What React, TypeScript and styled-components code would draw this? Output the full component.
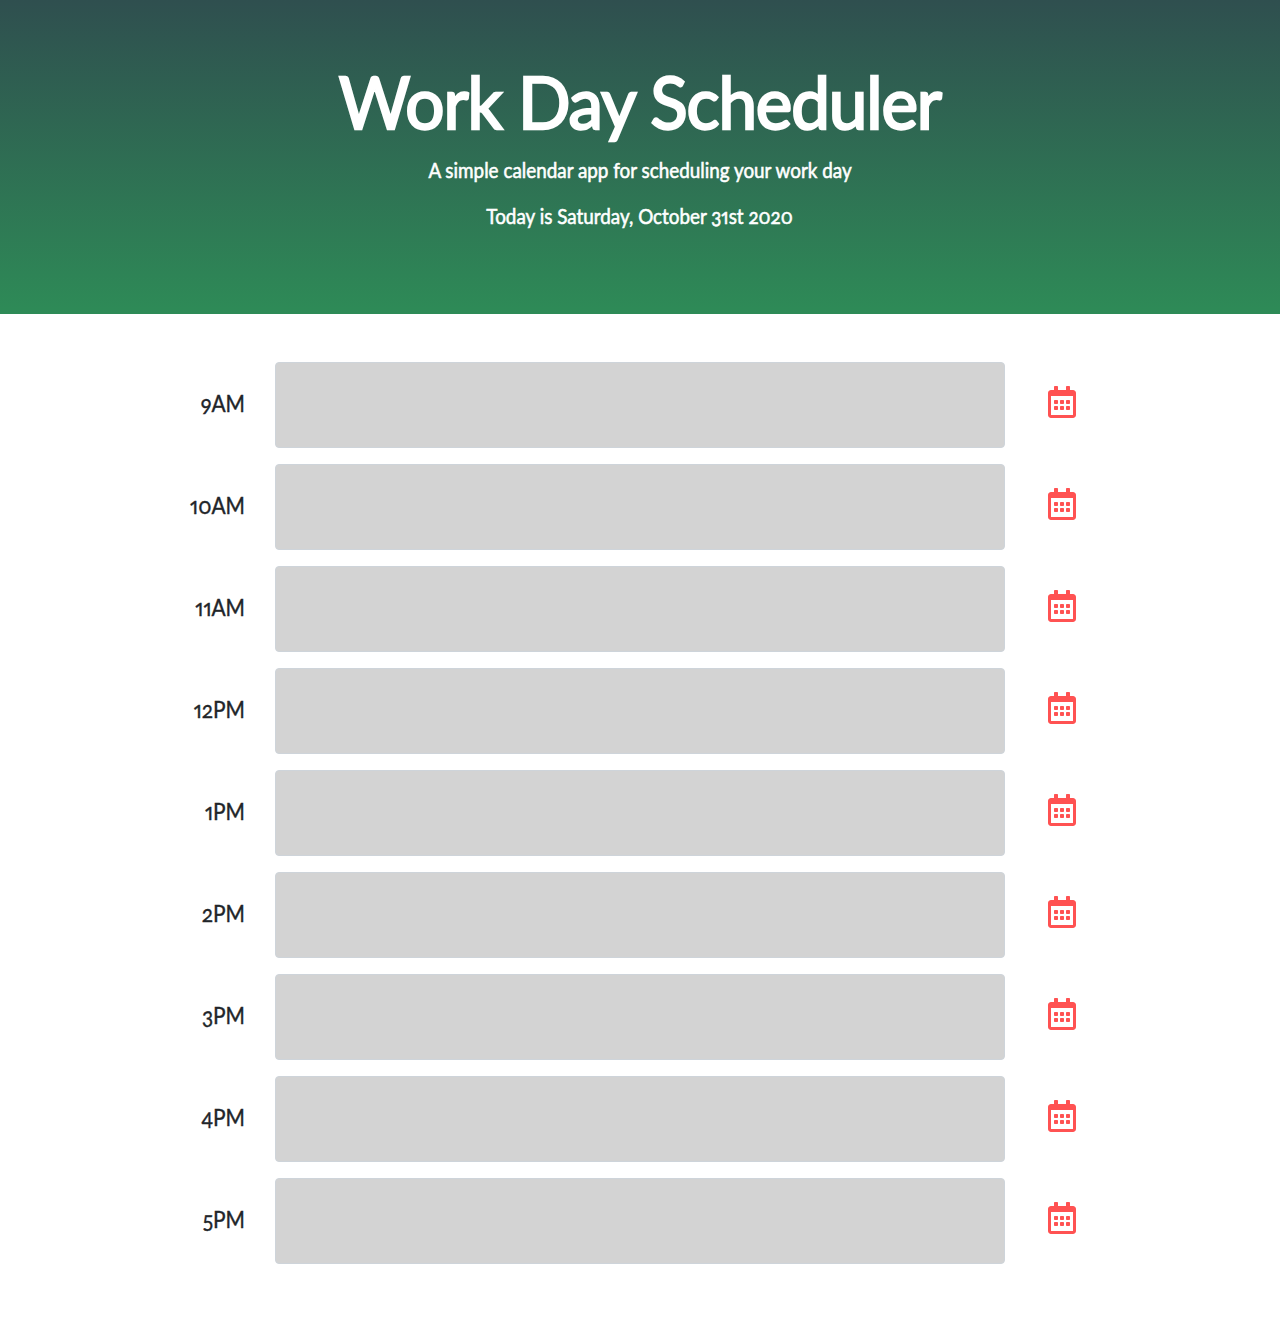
import React from "react";
import styled, { createGlobalStyle } from "styled-components";
import { FaRegCalendarAlt } from "react-icons/fa";

const GlobalStyle = createGlobalStyle`
  *, *::before, *::after { box-sizing: border-box; }
  body {
    margin: 0;
    background: #fff;
    color: #212529;
    font-family: Lato, "Open Sans", sans-serif;
    font-variant-numeric: oldstyle-nums proportional-nums;
  }
`;

const Page = styled.div`
  min-height: 1328px;
`;

const Header = styled.header`
  display: flex;
  flex-direction: column;
  align-items: center;
  height: 314px;
  padding-top: 59px;
  color: #fff;
  text-align: center;
  white-space: nowrap;
  background: linear-gradient(#2f4f4f, #2e8b57);
`;

const Title = styled.h1`
  margin: 0 0 10px;
  font-size: 71px;
  font-weight: 400;
  line-height: 86px;
  letter-spacing: -1.2px;
  transform: scaleX(0.975);
  -webkit-text-stroke: 2.4px #fff;
`;

const Lead = styled.p`
  margin: 0 0 16px;
  font-size: 20.5px;
  line-height: 30px;
  transform: scaleX(0.92);
  -webkit-text-stroke: 0.55px #fff;
`;

const Schedule = styled.main`
  display: flex;
  flex-direction: column;
  gap: 16px;
  width: 1110px;
  margin: 0 auto;
  padding-top: 48px;
`;

const TimeBlock = styled.div`
  display: grid;
  grid-template-columns: 160px 730px 1fr;
  column-gap: 30px;
  align-items: center;
  height: 86px;
`;

const Hour = styled.label`
  margin-bottom: 4px;
  text-align: right;
  font-size: 24px;
  line-height: 36px;
  transform: scaleX(0.87);
  transform-origin: right center;
  -webkit-text-stroke: 0.4px #212529;
`;

const Entry = styled.textarea`
  display: block;
  width: 100%;
  height: 86px;
  padding: 6px 12px;
  resize: none;
  border: 1px solid #ced4da;
  border-radius: 4px;
  background: #d3d3d3;
  font: inherit;
`;

const SaveButton = styled.button`
  display: flex;
  width: 28px;
  margin: 0 0 6px 13px;
  padding: 0;
  border: 0;
  background: none;
  color: #ff5252;
  cursor: pointer;

  svg {
    width: 28px;
    height: 32px;
  }
`;

const hours = ["9AM", "10AM", "11AM", "12PM", "1PM", "2PM", "3PM", "4PM", "5PM"];

export default function App() {
  return (
    <Page>
      <GlobalStyle />
      <Header>
        <Title>Work Day Scheduler</Title>
        <Lead>A simple calendar app for scheduling your work day</Lead>
        <Lead>Today is Saturday, October 31st 2020</Lead>
      </Header>
      <Schedule>
        {hours.map((hour) => (
          <TimeBlock key={hour}>
            <Hour htmlFor={hour}>{hour}</Hour>
            <Entry id={hour} />
            <SaveButton aria-label={`Save ${hour}`}>
              <FaRegCalendarAlt />
            </SaveButton>
          </TimeBlock>
        ))}
      </Schedule>
    </Page>
  );
}
